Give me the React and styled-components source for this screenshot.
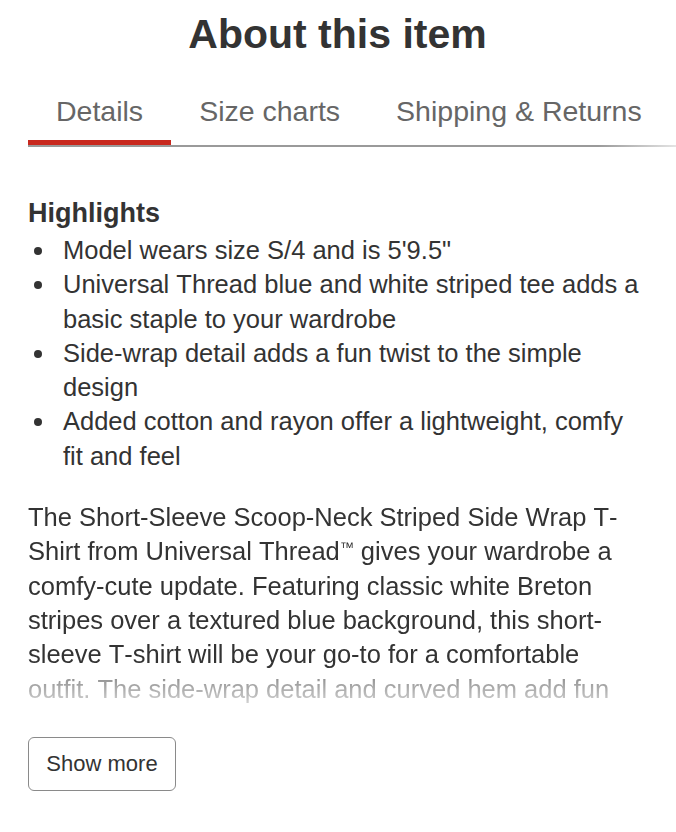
import React from "react";
import styled, { createGlobalStyle } from "styled-components";

const GlobalStyle = createGlobalStyle`
  html, body {
    margin: 0;
    padding: 0;
    background: #fff;
  }
  body {
    font-family: "Liberation Sans", Arial, Helvetica, sans-serif;
    color: #333;
    font-kerning: none;
  }
`;

const Page = styled.main`
  width: 676px;
  box-sizing: border-box;
  padding: 10px 29px 40px 28px;
`;

const Title = styled.h1`
  margin: 0;
  font-size: 41px;
  line-height: 48px;
  font-weight: 700;
  text-align: center;
  color: #333;
`;

const TabBar = styled.div`
  display: flex;
  margin: 33px -29px 0 0;
  padding-bottom: 2px;
  background: linear-gradient(to right, #9a9a9a 0%, #9a9a9a 88%, #e4e4e4 100%) bottom / 100% 2px no-repeat;
`;

const Tab = styled.button`
  appearance: none;
  border: 0;
  background: transparent;
  font-family: inherit;
  font-size: 28.5px;
  line-height: 40px;
  color: #666;
  padding: 0 28px 9px;
  margin: 0;
  white-space: nowrap;
  border-bottom: 5px solid ${(p) => (p.$active ? "#c8281e" : "transparent")};
  cursor: pointer;
`;

const Section = styled.section`
  margin-top: 49px;
`;

const Heading = styled.h2`
  margin: 0 0 3px;
  font-size: 27px;
  line-height: 34px;
  font-weight: 700;
  color: #333;
`;

const List = styled.ul`
  list-style: none;
  margin: 0;
  padding: 0;
`;

const Item = styled.li`
  display: flex;
  font-size: 25.5px;
  line-height: 34.3px;
  color: #333;
`;

const Dot = styled.span`
  flex: 0 0 35px;
  display: flex;
  align-items: flex-start;
  padding-top: 14px;
  padding-left: 6px;
  box-sizing: border-box;
  &::before {
    content: "";
    width: 8px;
    height: 8px;
    border-radius: 50%;
    background: #333;
  }
`;

const ItemText = styled.span`
  flex: 1;
`;

const Description = styled.p`
  margin: 27px 0 0;
  font-size: 25.5px;
  line-height: 34.3px;
  color: #333;
  height: 205.8px;
  overflow: hidden;
  -webkit-mask-image: linear-gradient(
    to bottom,
    #000 0,
    #000 calc(100% - 36px),
    rgba(0, 0, 0, 0.5) calc(100% - 26px),
    rgba(0, 0, 0, 0.2) 100%
  );
  mask-image: linear-gradient(
    to bottom,
    #000 0,
    #000 calc(100% - 36px),
    rgba(0, 0, 0, 0.5) calc(100% - 26px),
    rgba(0, 0, 0, 0.2) 100%
  );
`;

const Tm = styled.span`
  font-size: 0.55em;
  vertical-align: 0.55em;
  line-height: 0;
`;

const ShowMore = styled.button`
  margin-top: 31px;
  appearance: none;
  background: #fff;
  border: 1.5px solid #8a8a8a;
  border-radius: 6px;
  width: 148px;
  height: 54px;
  padding: 0;
  font-family: inherit;
  font-size: 22px;
  color: #333;
  cursor: pointer;
`;

const highlights = [
  "Model wears size S/4 and is 5'9.5\"",
  "Universal Thread blue and white striped tee adds a basic staple to your wardrobe",
  "Side-wrap detail adds a fun twist to the simple design",
  "Added cotton and rayon offer a lightweight, comfy fit and feel",
];

const tabs = ["Details", "Size charts", "Shipping & Returns"];

export default function App() {
  return (
    <>
      <GlobalStyle />
      <Page>
        <Title>About this item</Title>
        <TabBar>
          {tabs.map((t, i) => (
            <Tab key={t} $active={i === 0}>
              {t}
            </Tab>
          ))}
        </TabBar>
        <Section>
          <Heading>Highlights</Heading>
          <List>
            {highlights.map((h) => (
              <Item key={h}>
                <Dot />
                <ItemText>{h}</ItemText>
              </Item>
            ))}
          </List>
          <Description>
            The Short-Sleeve Scoop-Neck Striped Side Wrap T-Shirt from Universal Thread
            <Tm>™</Tm> gives your wardrobe a comfy-cute update. Featuring classic white
            Breton stripes over a textured blue background, this short-sleeve T-shirt will
            be your go-to for a comfortable outfit. The side-wrap detail and curved hem add
            fun dimension to the look, while the scoop neckline keeps it classic.
          </Description>
          <ShowMore>Show more</ShowMore>
        </Section>
      </Page>
    </>
  );
}
